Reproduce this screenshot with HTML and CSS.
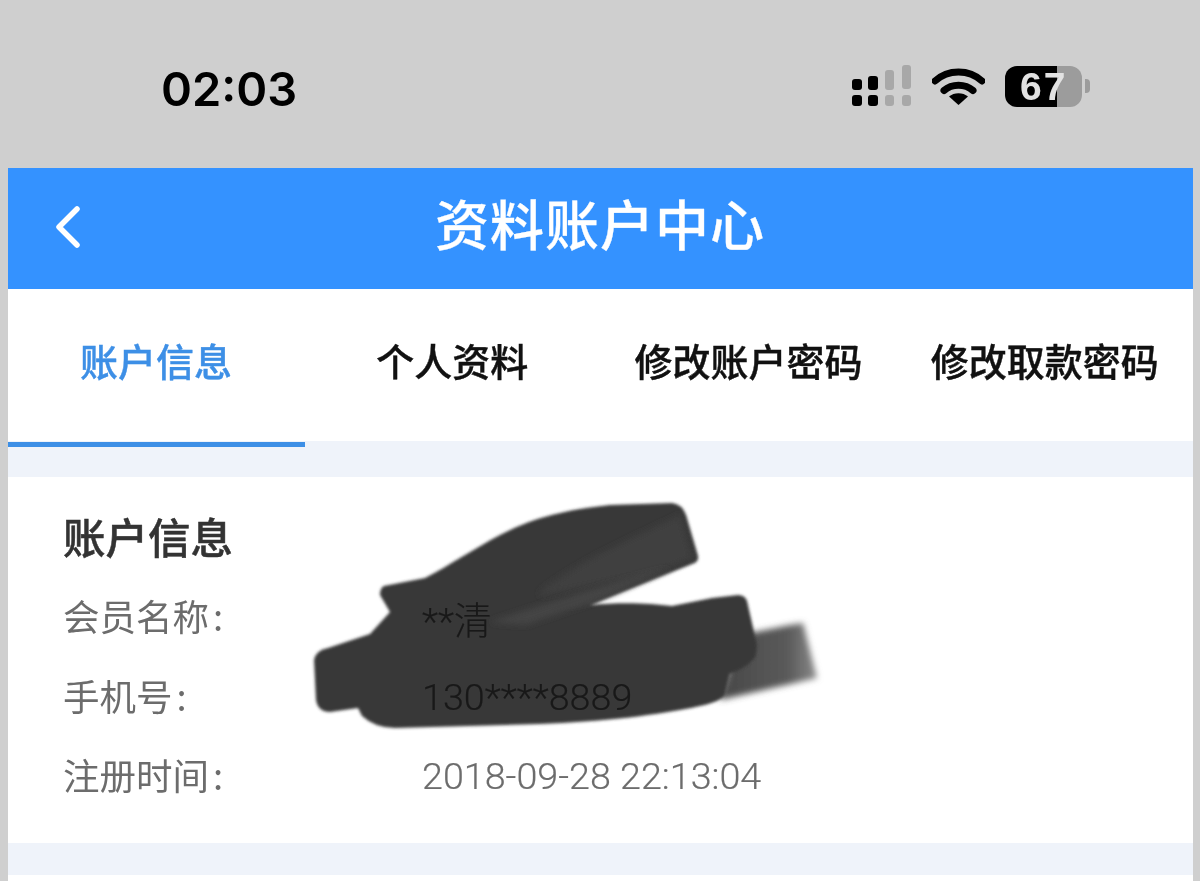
FILE: index.html
```html
<!DOCTYPE html>
<html lang="zh-CN">
<head>
    <meta charset="UTF-8">
    <meta name="viewport" content="width=device-width, initial-scale=1.0">
    <title>资料账户中心</title>
    <link rel="stylesheet" href="styles.css">
</head>
<body>
    <div class="status-bar">
        <div class="status-time">02:03</div>
        <div class="status-icons">
            <svg class="icon-signal" width="60" height="42" viewBox="0 0 60 42">
                <rect x="0" y="14" width="10" height="11" rx="3" fill="#000"/>
                <rect x="16" y="11" width="10" height="14" rx="3" fill="#000"/>
                <rect x="33" y="5" width="9" height="20" rx="3" fill="#a8a8a8"/>
                <rect x="50" y="0" width="9" height="24" rx="3" fill="#a8a8a8"/>
                <rect x="0" y="30" width="10" height="11" rx="3" fill="#000"/>
                <rect x="16" y="30" width="10" height="11" rx="3" fill="#000"/>
                <rect x="33" y="30" width="9" height="11" rx="3" fill="#a8a8a8"/>
                <rect x="50" y="30" width="9" height="11" rx="3" fill="#a8a8a8"/>
            </svg>
            <svg class="icon-wifi" width="53" height="38" viewBox="0 0 53 38">
                <path d="M3 14C16 2 37 2 50 14M12 23.500C20 16.500 33 16.500 41 23.500" fill="none" stroke="#000" stroke-width="7" stroke-linecap="round"/>
                <path d="M26.500 38L17 29.500C22 25 31 25 36 29.500Z" fill="#000"/>
            </svg>
            <div class="battery">
                <div class="battery-body">67</div>
                <div class="battery-tip"></div>
            </div>
        </div>
    </div>

    <div class="page">
        <div class="nav-bar">
            <svg class="nav-back" width="26" height="42" viewBox="0 0 26 42">
                <path d="M22 3L4 21L22 39" fill="none" stroke="#fff" stroke-width="5.500" stroke-linecap="round" stroke-linejoin="round"/>
            </svg>
            <h1 class="nav-title">资料账户中心</h1>
        </div>

        <div class="tabs">
            <div class="tab tab-active">账户信息</div>
            <div class="tab">个人资料</div>
            <div class="tab">修改账户密码</div>
            <div class="tab">修改取款密码</div>
        </div>

        <div class="content">
            <div class="card">
                <h2 class="card-title">账户信息</h2>
                <div class="info-row">
                    <span class="info-label">会员名称<span class="colon">:</span></span>
                    <span class="info-value">**清</span>
                </div>
                <div class="info-row">
                    <span class="info-label">手机号<span class="colon">:</span></span>
                    <span class="info-value">130****8889</span>
                </div>
                <div class="info-row">
                    <span class="info-label">注册时间<span class="colon">:</span></span>
                    <span class="info-value">2018-09-28 22:13:04</span>
                </div>

                <!-- 涂抹遮挡 -->
                <svg class="scribble" width="530" height="250" viewBox="0 0 530 250">
                    <defs>
                        <filter id="soft" x="-5%" y="-5%" width="110%" height="110%">
                            <feGaussianBlur stdDeviation="1.6"/>
                        </filter>
                        <filter id="softer" x="-10%" y="-10%" width="120%" height="120%">
                            <feGaussianBlur stdDeviation="3"/>
                        </filter>
                        <linearGradient id="tail" x1="0" y1="0" x2="1" y2="0">
                            <stop offset="0" stop-color="#484848"/>
                            <stop offset="0.7" stop-color="#5a5a5a"/>
                            <stop offset="1" stop-color="#8a8a8a"/>
                        </linearGradient>
                    </defs>
                    <path d="M440 145L490 135L503 133L517 188L420 210Z" fill="url(#tail)" filter="url(#softer)"/>
                    <path d="M84 96L125 88C150 75 175 58 200 45C235 27 265 20 310 15L372 13Q382 14 386 25L398 66Q399 72 392 74L290 115C320 112 350 113 372 116L412 108L438 105Q445 105 447 111L457 155L456 165Q452 175 430 184L425 205Q420 212 400 216C360 225 300 232 240 234L95 238Q75 238 62 226L58 218L30 222Q18 222 16 210L14 170Q16 160 28 158L70 144L90 122L80 105Q80 98 84 96Z" fill="#393939" filter="url(#soft)"/>
                    <path d="M240 102C280 70 340 45 380 25L392 68L290 112L260 118L340 85L240 106Z" fill="#414141" filter="url(#softer)"/>
                    <path d="M190 132C250 112 320 90 372 78L292 112L225 135Z" fill="#444" filter="url(#softer)"/>
                </svg>
            </div>
            <div class="card-next"></div>
        </div>
    </div>
</body>
</html>
```

FILE: styles.css
```css
* {
    margin: 0;
    padding: 0;
    box-sizing: border-box;
}

html, body {
    height: 881px;
    overflow: hidden;
}

body {
    font-family: "Noto Sans CJK SC", "Noto Sans", sans-serif;
    background: #cfcfcf;
}

.status-bar {
    height: 168px;
    padding: 8px 110px 0 161px;
    display: flex;
    align-items: center;
    justify-content: space-between;
}

.status-time {
    font-family: Inter, "Noto Sans", sans-serif;
    font-size: 47px;
    font-weight: 600;
    color: #000;
}

.status-icons {
    display: flex;
    align-items: center;
    gap: 20px;
    margin-top: -4px;
}

.battery {
    display: flex;
    align-items: center;
    gap: 3px;
}

.battery-body {
    width: 77px;
    height: 41px;
    border-radius: 12px;
    background: linear-gradient(90deg, #000 0, #000 52px, #9c9c9c 52px, #9c9c9c 100%);
    font-family: "Liberation Sans", sans-serif;
    font-size: 39px;
    font-weight: 700;
    line-height: 41px;
    letter-spacing: 2px;
    padding-left: 15px;
    color: #e2e2e2;
}

.battery-tip {
    width: 5px;
    height: 14px;
    border-radius: 0 4px 4px 0;
    background: #9c9c9c;
}

.page {
    margin: 0 7px 0 8px;
}

.nav-bar {
    height: 121px;
    background: #3492ff;
    display: grid;
    grid-template-columns: 1fr auto 1fr;
    align-items: center;
    padding: 0 0 4px 47px;
}

.nav-title {
    font-size: 54px;
    font-weight: 500;
    color: #fff;
    line-height: 1;
    letter-spacing: 1px;
    margin-bottom: 8px;
    -webkit-text-stroke: 0.3px #fff;
    transform: translateX(-24px);
}

.tabs {
    display: grid;
    grid-template-columns: repeat(4, 1fr);
    height: 152px;
    background: #fff;
}

.tab {
    position: relative;
    display: flex;
    align-items: center;
    justify-content: center;
    font-size: 38px;
    font-weight: 500;
    color: #111;
    padding-bottom: 12px;
    -webkit-text-stroke: 0.4px;
}

.tab-active {
    color: #3d8fe6;
}

.tab-active:after {
    content: "";
    position: absolute;
    left: 0;
    right: -1px;
    bottom: -6px;
    height: 5px;
    background: #3d8fe6;
}

.content {
    background: #eff3fa;
    padding-top: 36px;
    height: 440px;
}

.card {
    position: relative;
    height: 366px;
    background: #fff;
    padding: 31px 55px 0;
}

.card-title {
    font-size: 42.500px;
    font-weight: 500;
    line-height: 56px;
    color: #333;
    margin-bottom: 12px;
    -webkit-text-stroke: 0.5px;
}

.info-row {
    display: grid;
    grid-template-columns: 359px 1fr;
    height: 79.500px;
    align-items: center;
    font-size: 37.700px;
    color: #6c6c6c;
}

.info-label {
    font-size: 36.500px;
}

.colon {
    margin-left: 4px;
}

.info-value {
    font-family: Roboto, "Noto Sans CJK SC", sans-serif;
    font-weight: 300;
    padding-top: 3px;
    -webkit-text-stroke: 0.2px;
}

.scribble {
    position: absolute;
    left: 292px;
    top: 13px;
    mix-blend-mode: multiply;
}

.card-next {
    height: 6px;
    margin-top: 32px;
    background: #fff;
}
```
